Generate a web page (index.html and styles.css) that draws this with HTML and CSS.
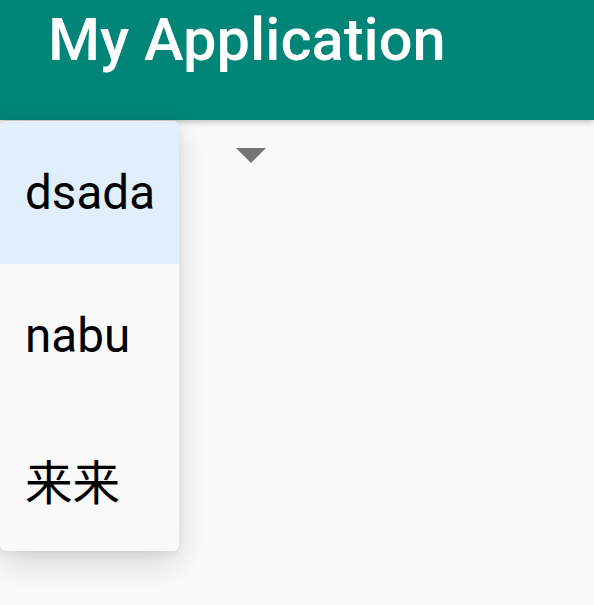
FILE: index.html
```html
<!DOCTYPE html>
<html>
<head>
<meta charset="utf-8">
<link rel="stylesheet" href="styles.css">
</head>
<body>
<header class="appbar"><h1 class="title">My Application</h1></header>
<main class="content">
  <div class="spinner">
    <svg class="arrow" width="30" height="15" viewBox="0 0 30 15"><polygon points="0,0 30,0 15,15" fill="#757575"/></svg>
  </div>
  <ul class="menu">
    <li class="item selected">dsada</li>
    <li class="item">nabu</li>
    <li class="item">来来</li>
  </ul>
</main>
</body>
</html>
```
FILE: styles.css
```css
html, body { margin: 0; padding: 0; }
body {
  width: 594px;
  height: 605px;
  overflow: hidden;
  background: #fafafa;
  font-family: Roboto, "Noto Sans CJK SC", sans-serif;
}
.appbar {
  height: 120px;
  background: #018577;
  box-shadow: 0 2px 6px rgba(0,0,0,0.25);
  position: relative;
  z-index: 1;
  padding-left: 48px;
  box-sizing: border-box;
}
.title {
  margin: 0;
  color: #fff;
  font-weight: 500;
  font-size: 59.6px;
  line-height: 80px;
}
.content { position: relative; height: 485px; }
.spinner { padding: 28px 0 0 236px; }
.arrow { display: block; }
.menu {
  position: absolute;
  left: 0;
  top: 1px;
  width: 179px;
  margin: 0;
  padding: 0;
  list-style: none;
  background: #fafafa;
  border-radius: 6px;
  box-shadow: 0 12px 34px rgba(0,0,0,0.14), 0 3px 10px rgba(0,0,0,0.08);
  overflow: hidden;
  z-index: 2;
}
.item {
  height: 143.3px;
  display: flex;
  align-items: center;
  padding-left: 25px;
  font-size: 47.6px;
  color: #000;
}
.selected { background: #e1eefb; }
```
